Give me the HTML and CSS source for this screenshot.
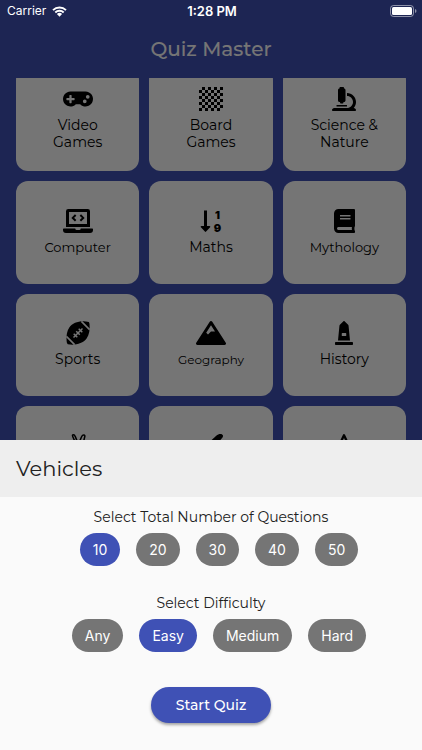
FILE: index.html
```html
<!DOCTYPE html>
<html lang="en">
<head>
<meta charset="utf-8">
<meta name="viewport" content="width=device-width, initial-scale=1">
<title>Quiz Master</title>
<link rel="stylesheet" href="styles.css">
</head>
<body>
<div class="app">
  <div class="status">
    <div class="status-side">
      <span>Carrier</span>
      <svg class="wifi" viewBox="0 0 15 11" aria-hidden="true"><path d="M1 4.1a9.3 9.3 0 0 1 13 0M3.3 6.5a6 6 0 0 1 8.4 0" fill="none" stroke="currentColor" stroke-width="1.9"/><path d="M4.9 8.1a3.7 3.7 0 0 1 5.2 0L7.500 10.800z" fill="currentColor"/></svg>
    </div>
    <strong class="time">1:28 PM</strong>
    <div class="status-side status-end">
      <svg class="battery" viewBox="0 0 27 12" aria-hidden="true"><rect x=".5" y=".5" width="23" height="11" rx="3" fill="none" stroke="currentColor" stroke-opacity=".5"/><rect x="2" y="2" width="20" height="8" rx="1.500" fill="currentColor"/><path d="M25 4v4q1.500-.6 1.500-2T25 4" fill="currentColor" fill-opacity=".5"/></svg>
    </div>
  </div>
  <header class="title-bar"><h1>Quiz Master</h1></header>
  <main class="list">
    <div class="grid">
      <button class="card"><svg viewBox="0 0 640 512"><path d="M480.070 96H160a160 160 0 1 0 114.240 272h91.520A160 160 0 1 0 480.070 96zM248 268a12 12 0 0 1-12 12h-52v52a12 12 0 0 1-12 12h-24a12 12 0 0 1-12-12v-52H84a12 12 0 0 1-12-12v-24a12 12 0 0 1 12-12h52v-52a12 12 0 0 1 12-12h24a12 12 0 0 1 12 12v52h52a12 12 0 0 1 12 12zm216 76a40 40 0 1 1 40-40 40 40 0 0 1-40 40zm64-96a40 40 0 1 1 40-40 40 40 0 0 1-40 40z"/></svg><span>Video<br>Games</span></button>
      <button class="card"><svg viewBox="0 0 24 24"><defs><pattern id="board" width="6" height="6" patternUnits="userSpaceOnUse"><path d="M3 0h3v3H3zM0 3h3v3H0z"/></pattern></defs><rect width="24" height="24" fill="url(#board)"/></svg><span>Board<br>Games</span></button>
      <button class="card"><svg viewBox="0 0 512 512"><path d="M160 320h12v16c0 8.840 7.160 16 16 16h40c8.840 0 16-7.160 16-16v-16h12c17.670 0 32-14.330 32-32V64c0-17.670-14.330-32-32-32V16c0-8.840-7.160-16-16-16h-64c-8.840 0-16 7.160-16 16v16c-17.670 0-32 14.330-32 32v224c0 17.670 14.330 32 32 32zm304 128h-1.290C493.240 413.990 512 369.200 512 320c0-105.880-86.120-192-192-192v64c70.580 0 128 57.420 128 128s-57.420 128-128 128H48c-26.510 0-48 21.490-48 48 0 8.840 7.160 16 16 16h480c8.840 0 16-7.160 16-16 0-26.510-21.490-48-48-48zm-360-32h208c4.420 0 8-3.580 8-8v-16c0-4.420-3.580-8-8-8H104c-4.420 0-8 3.580-8 8v16c0 4.420 3.580 8 8 8z"/></svg><span>Science &amp;<br>Nature</span></button>

      <button class="card card-medium"><svg viewBox="0 0 640 512"><path fill-rule="evenodd" d="M112 0h416q48 0 48 48v336H64V48Q64 0 112 0zM128 64v256h384V64z"/><path d="M16 416h245q3 32 32 32h54q29 0 32-32h245q16 0 16 16v16q0 64-64 64H64Q0 512 0 448v-16q0-16 16-16z"/><path d="M270 128l-62 62 62 62M370 128l62 62-62 62" fill="none" stroke="#000" stroke-width="42"/></svg><span>Computer</span></button>
      <button class="card"><svg viewBox="0 0 24 24"><path d="M5 1.500h3v15.500h2.500c.8 0 1.100.8.600 1.300l-4 4.300c-.4.400-.8.400-1.200 0l-4-4.300c-.5-.5-.2-1.300.6-1.300H5z"/><text class="digits" x="18.500" y="10" text-anchor="middle">1</text><text class="digits" x="18.500" y="23" text-anchor="middle">9</text></svg><span>Maths</span></button>
      <button class="card card-medium"><svg viewBox="0 0 448 512"><path d="M448 360V24c0-13.300-10.700-24-24-24H96C43 0 0 43 0 96v320c0 53 43 96 96 96h328c13.300 0 24-10.700 24-24v-16c0-7.500-3.500-14.300-8.900-18.700-4.200-15.400-4.200-59.300 0-74.700 5.400-4.300 8.900-11.100 8.900-18.600zM128 134c0-3.300 2.700-6 6-6h212c3.300 0 6 2.700 6 6v20c0 3.300-2.700 6-6 6H134c-3.300 0-6-2.700-6-6v-20zm0 64c0-3.300 2.700-6 6-6h212c3.300 0 6 2.700 6 6v20c0 3.300-2.700 6-6 6H134c-3.300 0-6-2.700-6-6v-20zm253.400 250H96c-17.700 0-32-14.300-32-32 0-17.600 14.400-32 32-32h285.400c-1.900 17.100-1.900 46.900 0 64z"/></svg><span>Mythology</span></button>

      <button class="card"><svg viewBox="0 0 24 24"><path d="M22.800.9C14.500-.8 7 1.300 3.300 6.500 1 9.900.1 14.500.6 20q.1 2.600 1.200 3.300c7.500 1.300 15-.7 18.800-5.800C23.200 14 24.100 8.500 23.500 3q-.2-1.700-.7-2.100z"/><g class="lacing" fill="none"><path d="M15.400.4l8.200 8.200M.4 15.400l8.200 8.200" stroke-width="1.600"/><path d="M7.500 16.500l9-9M7.700 12.700l3.600 3.600M10.200 10.200l3.600 3.600M12.700 7.700l3.600 3.600" stroke-width="1.500"/></g></svg><span>Sports</span></button>
      <button class="card card-small"><svg viewBox="0 0 640 512"><path d="M634.920 462.700l-288-448C341.030 5.540 330.890 0 320 0s-21.030 5.540-26.920 14.700l-288 448a32 32 0 0 0-1.170 32.640A32 32 0 0 0 32 512h576c11.710 0 22.480-6.390 28.090-16.670a32 32 0 0 0-1.170-32.630zM320 91.180L405.390 224H320l-64 64-38.060-38.060z"/></svg><span>Geography</span></button>
      <button class="card"><svg viewBox="0 0 384 512"><path d="M368 448H16c-8.840 0-16 7.160-16 16v32c0 8.840 7.160 16 16 16h352c8.840 0 16-7.160 16-16v-32c0-8.840-7.160-16-16-16zm-78.860-347.260a32 32 0 0 0-9.210-19.440L203.310 4.690c-6.250-6.250-16.380-6.250-22.630 0l-76.600 76.610a32 32 0 0 0-9.210 19.440L64 416h256zM240 307.200c0 6.400-6.400 12.800-12.800 12.800h-70.400c-6.400 0-12.800-6.400-12.800-12.800v-38.400c0-6.400 6.400-12.800 12.800-12.800h70.400c6.400 0 12.800 6.400 12.800 12.800z"/></svg><span>History</span></button>

      <button class="card" aria-label="Politics"><svg viewBox="0 0 24 24"><path d="M10.500 11L6.800 2.700Q6 .8 7.200.8q1.300-.2 2 1.600L12.400 10l3.300-7.500Q16.500.7 18 .9q1.300.4.700 2.100L16.500 12l3 3v4l-3 4h-8l-3-5z" fill="none" stroke="#000" stroke-width="1.500"/></svg><span></span></button>
      <button class="card" aria-label="Art"><svg viewBox="0 0 24 24"><path d="M21.300 0C18.500 0 17 1.700 8 11l5 5 10.500-12.500C24.800 1.700 23.600 0 21.300 0zM7 13l4 4c0 5-3 7-6 7-3.500 0-5-3-5-6 3 1 3-5 7-5z"/></svg><span></span></button>
      <button class="card" aria-label="Celebrities"><svg viewBox="0 0 24 24"><path d="M12 1.200l3.200 6.800 7.300 1-5.300 5.200 1.300 7.400L12 18l-6.500 3.600 1.300-7.400L1.500 9l7.300-1z" fill="none" stroke="#000" stroke-width="2.300" stroke-linejoin="round"/></svg><span></span></button>
    </div>
  </main>
  <div class="scrim"></div>
  <section class="sheet" role="dialog" aria-labelledby="category">
    <header class="sheet-head"><h2 id="category">Vehicles</h2></header>
    <div class="sheet-body">
      <div class="group" role="group" aria-labelledby="count">
        <h3 id="count">Select Total Number of Questions</h3>
        <div class="chips">
          <button class="chip selected" aria-pressed="true">10</button>
          <button class="chip" aria-pressed="false">20</button>
          <button class="chip" aria-pressed="false">30</button>
          <button class="chip" aria-pressed="false">40</button>
          <button class="chip" aria-pressed="false">50</button>
        </div>
      </div>
      <div class="group" role="group" aria-labelledby="difficulty">
        <h3 id="difficulty">Select Difficulty</h3>
        <div class="chips">
          <button class="chip" aria-pressed="false">Any</button>
          <button class="chip selected" aria-pressed="true">Easy</button>
          <button class="chip" aria-pressed="false">Medium</button>
          <button class="chip" aria-pressed="false">Hard</button>
        </div>
      </div>
      <button class="start">Start Quiz</button>
    </div>
  </section>
</div>
</body>
</html>
```
FILE: styles.css
```css
* { box-sizing: border-box; }
body { margin: 0; font-family: Montserrat, Inter, sans-serif; }
h1, h2, h3 { margin: 0; font-weight: 400; }
button { border: 0; padding: 0; font: inherit; }

.app {
  position: relative;
  display: flex;
  flex-direction: column;
  height: 100vh;
  overflow: hidden;
  background: #3f51b5;
}

.status {
  position: relative;
  z-index: 2;
  display: flex;
  align-items: center;
  height: 22px;
  padding: 0 5px 0 7px;
  color: #fff;
  font: 12px/22px Inter, sans-serif;
}
.status-side { flex: 1; display: flex; align-items: center; gap: 6px; }
.status-end { justify-content: flex-end; }
.time { font-weight: 600; font-size: 13px; }
.wifi { width: 15px; height: 11px; }
.battery { width: 27px; height: 12px; }

.title-bar {
  display: flex;
  align-items: center;
  justify-content: center;
  height: 56px;
  padding-bottom: 2px;
  color: #fff;
}
.title-bar h1 { font-size: 20px; font-weight: 500; }

.list { flex: 1; min-height: 0; overflow: hidden; }
.grid {
  display: grid;
  grid-template-columns: repeat(3, 1fr);
  gap: 10px;
  margin-top: -10px;
  padding: 0 16px;
}
.card {
  display: flex;
  flex-direction: column;
  align-items: center;
  justify-content: center;
  gap: 6px;
  aspect-ratio: 6 / 5;
  border-radius: 12px;
  background: #fff;
  color: #000;
  font-size: 14px;
  line-height: 17px;
}
.card svg { height: 24px; overflow: visible; }
.card span { min-height: 17px; }
.card-medium { font-size: 13px; }
.card-small { font-size: 12px; }
.lacing { stroke: #fff; }
.digits { font: 900 11px Inter, sans-serif; }

.scrim { position: absolute; inset: 0; background: rgba(0, 0, 0, 0.54); }

.sheet {
  position: absolute;
  inset: auto 0 0;
  background: #fafafa;
  color: #212121;
}
.sheet-head { padding: 16px; background: #eee; }
.sheet-head h2 { font-size: 21px; line-height: 25px; }
.sheet-body {
  display: flex;
  flex-direction: column;
  align-items: center;
  padding: 10px 0 27px;
}
.group { margin-bottom: 27px; text-align: center; }
.group h3 { font-size: 14px; line-height: 20px; }
.chips {
  display: flex;
  justify-content: center;
  gap: 16px;
  margin-top: 6px;
  padding-left: 16px;
}
.chip {
  height: 33px;
  padding: 0 13px;
  border-radius: 17px;
  background: #757575;
  color: #fff;
  font: 14px Inter, sans-serif;
}
.start {
  height: 36px;
  margin-top: 8px;
  padding: 0 25px;
  border-radius: 18px;
  background: #3f51b5;
  box-shadow: 0 2px 3px rgba(0, 0, 0, 0.35);
  color: #fff;
  font-size: 14px;
  font-weight: 500;
}
.chip.selected { background: #3f51b5; }
```
